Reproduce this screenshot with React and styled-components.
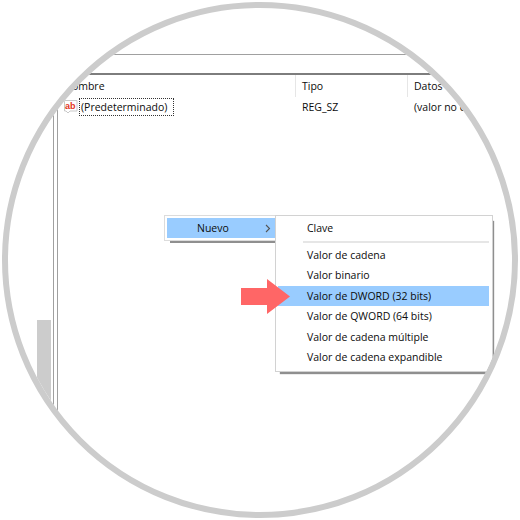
import React from "react";
import styled, { createGlobalStyle } from "styled-components";

const Global = createGlobalStyle`
  html, body { margin: 0; padding: 0; background: #fff; }
  body { font-family: "Open Sans", "Noto Sans", "Liberation Sans", sans-serif; font-size: 10.5px; color: #0c0c0c; }
`;
const Page = styled.div`
  width: 520px; height: 520px; box-sizing: border-box; padding: 2px; background: #fff;
`;
const Ring = styled.div`
  position: relative; width: 516px; height: 516px; box-sizing: border-box;
  border: 6px solid #cccccc; border-radius: 50%; overflow: hidden;
  display: flex; flex-direction: column; padding-top: 46px; background: #fff;
`;
const AddressBar = styled.div`
  height: 18px; flex: none;
  border-top: 1px solid #a0a0a0; border-bottom: 2px solid #7d7d7d;
`;
const Body = styled.div`
  flex: 1; display: flex; min-height: 0;
`;
const Tree = styled.div`
  width: 45px; flex: none; display: flex; flex-direction: column; justify-content: flex-end;
  align-items: flex-end;
`;
const Thumb = styled.div`
  width: 14px; height: 192px; margin-right: 2px; background: #cccccc;
`;
const Splitter = styled.div`
  width: 3px; flex: none; border-left: 1px solid #a0a0a0; border-right: 1px solid #a0a0a0;
`;
const List = styled.div`
  flex: 1; padding-left: 6px; display: flex; flex-direction: column;
`;
const Header = styled.div`
  display: grid; grid-template-columns: 230px 112px 1fr; height: 22px;
`;
const HeadCell = styled.div`
  display: flex; align-items: center; padding-left: ${p => p.$pad || 0}px;
  border-left: ${p => (p.$sep ? "1px solid #e6e6e6" : "none")};
  margin-left: ${p => (p.$sep ? "1px" : "0")};
`;
const Row = styled.div`
  display: grid; grid-template-columns: 231px 112px 1fr; height: 20px; align-items: center;
`;
const NameCell = styled.div`
  display: flex; align-items: center; gap: 1px;
`;
const Focus = styled.span`
  border: 1px dotted #333; padding: 0 0 0 1px; line-height: 16px; box-sizing: border-box; height: 18px; width: 95px; white-space: nowrap;
`;
const TextCell = styled.div`
  padding-left: ${p => p.$pad || 0}px; white-space: nowrap;
`;
const NewMenu = styled.div`
  position: absolute; left: 156px; top: 207px; width: 112px; height: 26px; box-sizing: border-box;
  border: 1px solid #dcdcdc; border-right: none; padding: 2px 0 2px 2px; background: #fff;
  box-shadow: 4px 4px 0 -2px #8f8f8f;
`;
const NewItem = styled.div`
  height: 100%; background: #99ccff; display: flex; align-items: center; justify-content: space-between;
  padding: 0 5px 0 30px;
`;
const SubMenu = styled.div`
  position: absolute; left: 267px; top: 207px; width: 218px; height: 157px; box-sizing: border-box;
  background: #fff; border: 1px solid #d2d2d2; padding: 2px 3px 0 2px;
  box-shadow: 3px 4px 1px -2px #8f8f8f;
`;
const Item = styled.div`
  height: 20.5px; display: flex; align-items: center; padding-left: 29px; white-space: nowrap;
  background: ${p => (p.$on ? "#99ccff" : "transparent")};
`;
const Sep = styled.div`
  height: 2px; background: #e6e6e6; margin: 2px 0 2px 25px;
`;
const Arrow = styled.svg`
  position: absolute; left: 233px; top: 271px;
`;

const Icon = () => (
  <svg width="14" height="16" viewBox="0 0 14 16">
    <path d="M0.5 1.500h12.500v10.500h-7l-2 2-2-2h-1.500z" fill="#fff" stroke="#c9c9c9" />
    <text x="1" y="10" fontSize="9" fontWeight="700" fontFamily="Liberation Sans, sans-serif" fill="#e2331c">ab</text>
  </svg>
);
const Chevron = () => (
  <svg width="6" height="9" viewBox="0 0 6 9"><path d="M1 1l3.500 3.500L1 8" fill="none" stroke="#555" strokeWidth="1.100" /></svg>
);

export default function App() {
  return (
    <Page>
      <Global />
      <Ring>
        <AddressBar />
        <Body>
          <Tree><Thumb /></Tree>
          <Splitter />
          <List>
            <Header>
              <HeadCell>Nombre</HeadCell>
              <HeadCell $sep $pad={6}>Tipo</HeadCell>
              <HeadCell $sep $pad={6}>Datos</HeadCell>
            </Header>
            <Row>
              <NameCell><Icon /><Focus>(Predeterminado)</Focus></NameCell>
              <TextCell $pad={7}>REG_SZ</TextCell>
              <TextCell $pad={7}>(valor no establecido)</TextCell>
            </Row>
          </List>
        </Body>
        <NewMenu>
          <NewItem>Nuevo<Chevron /></NewItem>
        </NewMenu>
        <SubMenu>
          <Item>Clave</Item>
          <Sep />
          <Item>Valor de cadena</Item>
          <Item>Valor binario</Item>
          <Item $on>Valor de DWORD (32 bits)</Item>
          <Item>Valor de QWORD (64 bits)</Item>
          <Item>Valor de cadena múltiple</Item>
          <Item>Valor de cadena expandible</Item>
        </SubMenu>
        <Arrow width="50" height="36" viewBox="0 0 50 36">
          <path d="M0 9h26V0l23 17.500L26 35v-9H0z" fill="#ff6666" />
        </Arrow>
      </Ring>
    </Page>
  );
}
